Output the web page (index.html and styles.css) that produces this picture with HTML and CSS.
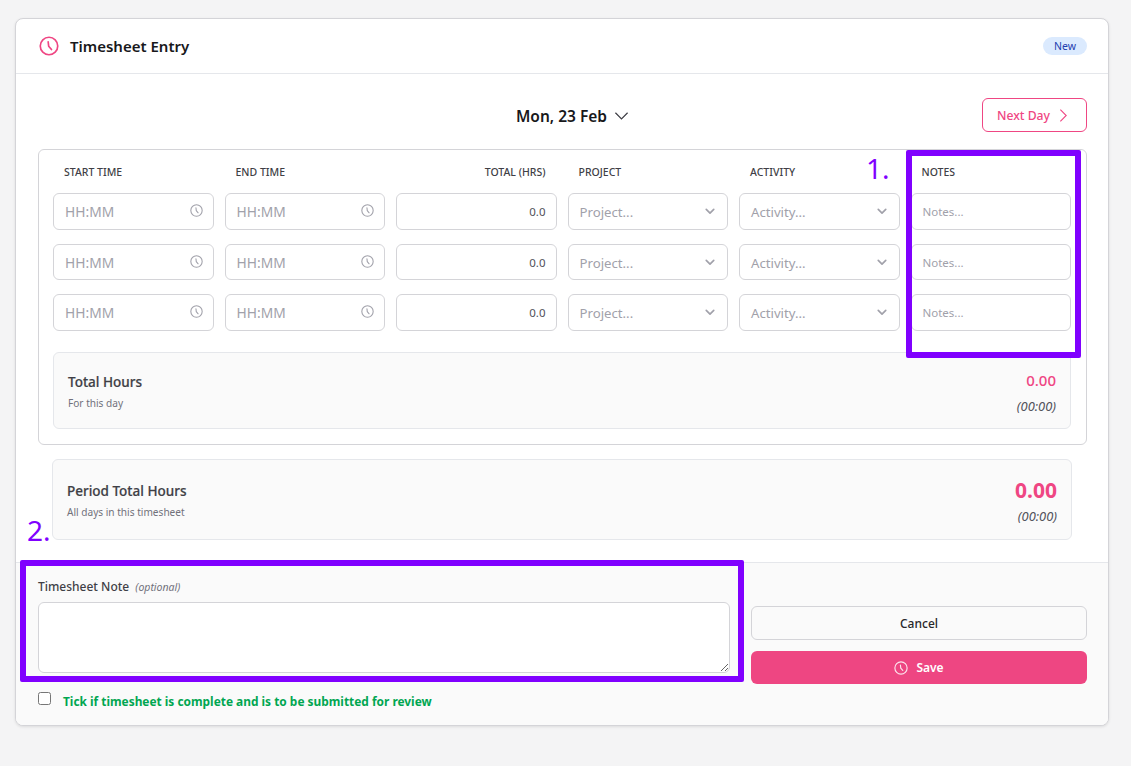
FILE: index.html
```html
<!DOCTYPE html>
<html lang="en">
<head>
<meta charset="utf-8">
<title>Timesheet Entry</title>
<link rel="stylesheet" href="styles.css">
</head>
<body>
<svg class="defs" width="0" height="0" aria-hidden="true">
  <symbol id="clock" viewBox="0 0 24 24"><circle cx="12" cy="12" r="10.5" fill="none" stroke="currentColor" stroke-width="2"/><path d="M11 7l.6 5.2 3.4 4" fill="none" stroke="currentColor" stroke-width="2" stroke-linecap="round" stroke-linejoin="round"/></symbol>
  <symbol id="chev" viewBox="0 0 12 8"><path d="M1.5 1.5L6 6l4.5-4.5" fill="none" stroke="currentColor" stroke-width="2" stroke-linecap="round" stroke-linejoin="round"/></symbol>
</svg>
<main class="card">
  <header class="card-head">
    <div class="title-wrap">
      <svg class="title-icon"><use href="#clock"/></svg>
      <h1 class="title">Timesheet Entry</h1>
    </div>
    <span class="badge">New</span>
  </header>
  <section class="card-body">
    <div class="date-row">
      <div class="date-pick">
        <span>Mon, 23 Feb</span>
        <svg class="date-chev" viewBox="0 0 16 10"><path d="M1.5 1.5L8 8l6.5-6.5" fill="none" stroke="currentColor" stroke-width="1.3"/></svg>
      </div>
      <button class="next-btn">Next Day
        <svg class="next-chev" viewBox="0 0 10 16"><path d="M1.5 1.5L8 8l-6.5 6.5" fill="none" stroke="currentColor" stroke-width="1.2"/></svg>
      </button>
    </div>
    <div class="entry">
      <div class="grid">
        <div class="th">START TIME</div><div class="th">END TIME</div><div class="th th-right">TOTAL (HRS)</div><div class="th">PROJECT</div><div class="th">ACTIVITY</div><div class="th">NOTES</div>

        <div class="field ph time">HH:MM<svg class="field-clock"><use href="#clock"/></svg></div>
        <div class="field ph time">HH:MM<svg class="field-clock"><use href="#clock"/></svg></div>
        <div class="field total">0.0</div>
        <div class="field ph sel">Project...<svg class="field-chev"><use href="#chev"/></svg></div>
        <div class="field ph sel">Activity...<svg class="field-chev"><use href="#chev"/></svg></div>
        <div class="field ph note">Notes...</div>

        <div class="field ph time">HH:MM<svg class="field-clock"><use href="#clock"/></svg></div>
        <div class="field ph time">HH:MM<svg class="field-clock"><use href="#clock"/></svg></div>
        <div class="field total">0.0</div>
        <div class="field ph sel">Project...<svg class="field-chev"><use href="#chev"/></svg></div>
        <div class="field ph sel">Activity...<svg class="field-chev"><use href="#chev"/></svg></div>
        <div class="field ph note">Notes...</div>

        <div class="field ph time">HH:MM<svg class="field-clock"><use href="#clock"/></svg></div>
        <div class="field ph time">HH:MM<svg class="field-clock"><use href="#clock"/></svg></div>
        <div class="field total">0.0</div>
        <div class="field ph sel">Project...<svg class="field-chev"><use href="#chev"/></svg></div>
        <div class="field ph sel">Activity...<svg class="field-chev"><use href="#chev"/></svg></div>
        <div class="field ph note">Notes...</div>
      </div>
      <div class="summary day">
        <div>
          <div class="sum-title">Total Hours</div>
          <div class="sum-sub">For this day</div>
        </div>
        <div class="sum-right">
          <div class="sum-val">0.00</div>
          <div class="sum-time">(00:00)</div>
        </div>
      </div>
    </div>
    <div class="summary period">
      <div>
        <div class="sum-title">Period Total Hours</div>
        <div class="sum-sub">All days in this timesheet</div>
      </div>
      <div class="sum-right">
        <div class="sum-val big">0.00</div>
        <div class="sum-time">(00:00)</div>
      </div>
    </div>
  </section>
  <footer class="card-foot">
    <div class="foot-row">
      <div class="note-col">
        <div class="note-label">Timesheet Note <em>(optional)</em></div>
        <textarea class="note-area"></textarea>
      </div>
      <div class="actions">
        <button class="cancel">Cancel</button>
        <button class="save"><svg class="save-icon"><use href="#clock"/></svg>Save</button>
      </div>
    </div>
    <label class="tick">
      <input class="tick-box" type="checkbox">
      <span>Tick if timesheet is complete and is to be submitted for review</span>
    </label>
  </footer>
</main>
<div class="mark mark-1"></div>
<div class="mark mark-2"></div>
<div class="mark-num num-1">1.</div>
<div class="mark-num num-2">2.</div>
</body>
</html>
```

FILE: styles.css
```css
* { box-sizing: border-box; }
html, body { height: 100%; }
body {
  margin: 0;
  padding: 18px 22px 0 15px;
  background: #f4f4f5;
  font-family: "Noto Sans", "Open Sans", "Liberation Sans", sans-serif;
  color: #1f2937;
  overflow: hidden;
  position: relative;
}
.defs { position: absolute; }
.card {
  width: 1094px;
  height: 708px;
  background: #fff;
  border: 1px solid #d4d4d8;
  border-radius: 8px;
  box-shadow: 0 1px 3px rgba(0,0,0,.1);
  display: flex;
  flex-direction: column;
  overflow: hidden;
}
.card-head {
  height: 55px;
  flex: none;
  display: flex;
  align-items: center;
  justify-content: space-between;
  padding: 0 21px 0 23px;
  border-bottom: 1px solid #e5e7eb;
}
.title-wrap { display: flex; align-items: center; gap: 11px; }
.title-icon { width: 20px; height: 20px; color: #ef4683; }
.title { margin: 0; font-size: 15px; font-weight: 600; color: #18181b; line-height: 20px; }
.badge {
  background: #dbeafe;
  color: #1e40af;
  font-size: 10.5px;
  font-weight: 400;
  width: 44px;
  height: 18px;
  line-height: 18px;
  text-align: center;
  border-radius: 9px;
}
.card-body { flex: 1; padding: 24px 21px 0 22px; }
.date-row { position: relative; height: 51px; display: flex; justify-content: center; }
.date-pick {
  display: flex; align-items: center; gap: 7px; height: 35px;
  font-size: 15.5px; font-weight: 600; color: #18181b;
  margin-left: 20px;
}
.date-chev { width: 15px; height: 10px; color: #3f3f46; }
.next-btn {
  position: absolute; right: 0; top: 0;
  width: 105px; height: 34px;
  background: #fff;
  border: 1px solid #ef4683;
  border-radius: 6px;
  color: #ef4683;
  font: 500 12.2px "Noto Sans", sans-serif;
  display: flex; align-items: center; justify-content: center; gap: 9px;
  padding: 0 4px 0 0;
}
.next-chev { width: 9px; height: 15px; }
.entry {
  height: 296px;
  border: 1px solid #d4d4d8;
  border-radius: 6px;
  padding: 0 15px 0 14px;
}
.grid {
  display: grid;
  grid-template-columns: repeat(6, 160.5px);
  column-gap: 11px;
  grid-template-rows: 29px repeat(3, 36.5px);
  row-gap: 14px;
}
.th {
  font-size: 10.5px; font-weight: 500; color: #3f3f46;
  padding: 15px 0 0 11px; line-height: 14px;
}
.th-right { text-align: right; padding: 15px 11px 0 0; }
.field {
  position: relative;
  height: 36.5px;
  border: 1px solid #d4d4d8;
  border-radius: 6px;
  background: #fff;
  font-size: 13.2px;
  line-height: 37px;
  padding: 0 11px;
}
.ph { color: #a1a1aa; }
.time { font-size: 13.8px; line-height: 36px; }
.total { text-align: right; color: #52525b; font-size: 11.5px; line-height: 36px; padding-right: 10px; }
.note { font-size: 11.5px; line-height: 36px; }
.field-clock { position: absolute; right: 10px; top: 10px; width: 13px; height: 13px; color: #a1a1aa; }
.field-chev { position: absolute; right: 12px; top: 14px; width: 10px; height: 7px; color: #a1a1aa; }
.summary {
  display: flex; justify-content: space-between;
  background: #fafafa;
  border: 1px solid #e5e7eb;
  border-radius: 6px;
}
.day { height: 77px; margin-top: 21.5px; padding: 20px 14px 0 14px; }
.period { height: 81px; width: 1020px; margin: 14px 0 0 14px; padding: 22px 14px 0 14px; }
.sum-title { font-size: 13.5px; font-weight: 500; -webkit-text-stroke: .2px #3f3f46; color: #3f3f46; line-height: 18px; }
.sum-sub { font-size: 10.1px; color: #71717a; line-height: 14px; margin-top: 5px; }
.sum-right { text-align: right; margin-top: -2px; }
.period .sum-right { margin-top: -1px; }
.sum-val { font-size: 15px; font-weight: 500; color: #ef4683; line-height: 18px; }
.period .sum-val.big { font-size: 21px; font-weight: 700; line-height: 18px; }
.sum-time { font-size: 12.9px; font-style: italic; font-weight: 400; color: #52525b; line-height: 14px; margin-top: 10px; }
.card-foot {
  flex: none;
  height: 163px;
  background: #fafafa;
  border-top: 1px solid #e5e7eb;
  padding: 16px 21px 0 22px;
}
.foot-row { display: flex; gap: 21px; }
.note-col { width: 692px; flex: none; }
.note-label { font-size: 12px; font-weight: 500; color: #3f3f46; line-height: 16px; }
.note-label em { font-size: 10.5px; font-weight: 400; color: #71717a; margin-left: 3px; }
.note-area {
  display: block; width: 692px; height: 71px; margin: 7px 0 0;
  background: #fff;
  border: 1px solid #d4d4d8;
  border-radius: 6px;
  outline: none;
}
.actions { flex: 1; padding-top: 27px; display: flex; flex-direction: column; gap: 11px; }
.cancel {
  height: 34px;
  background: #fafafa;
  border: 1px solid #d4d4d8;
  border-radius: 6px;
  color: #27272a;
  font: 500 12px "Noto Sans", sans-serif;
}
.save {
  height: 33px;
  background: #ee4682;
  border: 0;
  border-radius: 6px;
  color: #fff;
  font: 600 12px "Noto Sans", sans-serif;
  display: flex; align-items: center; justify-content: center; gap: 8px;
}
.save-icon { width: 14px; height: 14px; opacity: .85; }
.tick { display: flex; align-items: flex-start; gap: 12px; margin-top: 8px; }
.tick-box { width: 13px; height: 13px; margin: 0; appearance: auto; }
.tick span { font-size: 11.9px; font-weight: 700; color: #00a651; line-height: 16px; margin-top: 1px; }
.mark { position: absolute; border: 6px solid #8000ff; border-radius: 2px; }
.mark-1 { left: 906px; top: 150px; width: 175px; height: 208px; }
.mark-2 { left: 20px; top: 560px; width: 724px; height: 122px; }
.mark-num { position: absolute; color: #8000ff; font-size: 28px; line-height: 34px; }
.num-1 { left: 866px; top: 151px; }
.num-2 { left: 27px; top: 513px; }
```
